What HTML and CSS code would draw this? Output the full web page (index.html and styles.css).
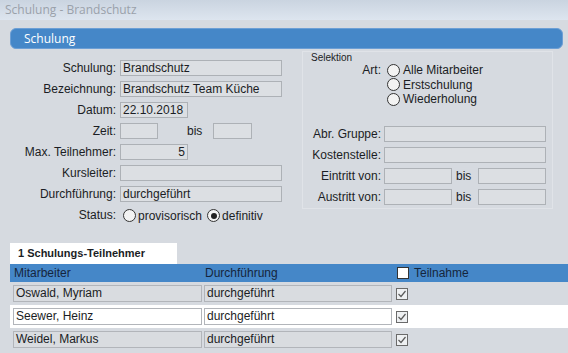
FILE: index.html
```html
<!DOCTYPE html>
<html lang="de">
<head>
    <meta charset="UTF-8">
    <title>Schulung - Brandschutz</title>
    <link rel="stylesheet" href="styles.css">
</head>
<body>
    <div class="titlebar">Schulung - Brandschutz</div>

    <div class="window">
        <div class="section-bar">Schulung</div>

        <div class="form">
            <div class="left">
                <label>Schulung:</label>
                <div class="field wide">Brandschutz</div>

                <label>Bezeichnung:</label>
                <div class="field wide">Brandschutz Team Küche</div>

                <label>Datum:</label>
                <div class="field short">22.10.2018</div>

                <label>Zeit:</label>
                <div class="zeit">
                    <div class="field tiny"></div>
                    <span class="bis">bis</span>
                    <div class="field tiny"></div>
                </div>

                <label>Max. Teilnehmer:</label>
                <div class="field short num">5</div>

                <label>Kursleiter:</label>
                <div class="field wide"></div>

                <label>Durchführung:</label>
                <div class="field wide">durchgeführt</div>

                <label>Status:</label>
                <div class="radios-inline">
                    <span class="radio"></span><span>provisorisch</span>
                    <span class="radio checked"></span><span>definitiv</span>
                </div>
            </div>

            <div class="selektion">
                <div class="legend">Selektion</div>
                <div class="sel-grid">
                    <label class="art-label">Art:</label>
                    <div class="radios">
                        <div class="radio-item"><span class="radio"></span>Alle Mitarbeiter</div>
                        <div class="radio-item"><span class="radio"></span>Erstschulung</div>
                        <div class="radio-item"><span class="radio"></span>Wiederholung</div>
                    </div>

                    <label class="first">Abr. Gruppe:</label>
                    <div class="field wide first"></div>

                    <label>Kostenstelle:</label>
                    <div class="field wide"></div>

                    <label>Eintritt von:</label>
                    <div class="range">
                        <div class="field short"></div>
                        <span class="bis">bis</span>
                        <div class="field short"></div>
                    </div>

                    <label>Austritt von:</label>
                    <div class="range">
                        <div class="field short"></div>
                        <span class="bis">bis</span>
                        <div class="field short"></div>
                    </div>
                </div>
            </div>
        </div>

        <div class="tab">1 Schulungs-Teilnehmer</div>

        <div class="table">
            <div class="row head">
                <span>Mitarbeiter</span>
                <span>Durchführung</span>
                <span class="teil"><span class="box"></span>Teilnahme</span>
            </div>
            <div class="row">
                <div class="cell">Oswald, Myriam</div>
                <div class="cell">durchgeführt</div>
                <span class="check"><svg width="12" height="12" viewBox="0 0 12 12"><polyline points="2.5,6 5,8.5 9.5,3" fill="none" stroke="#5a5a5a" stroke-width="1.2"/></svg></span>
            </div>
            <div class="row selected">
                <div class="cell">Seewer, Heinz</div>
                <div class="cell">durchgeführt</div>
                <span class="check"><svg width="12" height="12" viewBox="0 0 12 12"><polyline points="2.5,6 5,8.5 9.5,3" fill="none" stroke="#5a5a5a" stroke-width="1.2"/></svg></span>
            </div>
            <div class="row">
                <div class="cell">Weidel, Markus</div>
                <div class="cell">durchgeführt</div>
                <span class="check"><svg width="12" height="12" viewBox="0 0 12 12"><polyline points="2.5,6 5,8.5 9.5,3" fill="none" stroke="#5a5a5a" stroke-width="1.2"/></svg></span>
            </div>
        </div>
    </div>
</body>
</html>
```

FILE: styles.css
```css
body {
    margin: 0;
    font-family: "Liberation Sans", Arial, sans-serif;
    font-size: 12px;
    color: #1b1d24;
    background-color: #d6dae0;
    overflow: hidden;
}

.titlebar {
    height: 20px;
    line-height: 20px;
    padding-left: 5px;
    font-family: "Open Sans", "Noto Sans", sans-serif;
    font-size: 12px;
    color: #9aa1aa;
    background: linear-gradient(#cad4e0, #dde5ef);
}

.window {
    padding-left: 10px;
}

.section-bar {
    margin-top: 8px;
    width: 538px;
    height: 19px;
    line-height: 19px;
    padding-left: 13px;
    background-color: #4587c8;
    border: 1px solid #6d9fd5;
    border-radius: 6px;
    color: white;
    font-family: "Open Sans", "Noto Sans", sans-serif;
    font-size: 12px;
}

.form {
    display: flex;
    gap: 20px;
    height: 194px;
}

/* left side */
.left {
    display: grid;
    grid-template-columns: 106px 162px;
    grid-auto-rows: 16px;
    column-gap: 4px;
    row-gap: 5px;
    padding-top: 11px;
    align-content: start;
}

label {
    text-align: right;
    line-height: 16px;
    white-space: nowrap;
}

.field {
    box-sizing: border-box;
    height: 16px;
    line-height: 14px;
    padding: 0 2px;
    background-color: #dcdfe3;
    border: 1px solid #adb1b6;
    white-space: nowrap;
    overflow: hidden;
}

.wide {
    width: 162px;
}

.short {
    width: 68px;
}

.tiny {
    width: 38px;
}

.num {
    text-align: right;
}

.zeit,
.range {
    display: flex;
    align-items: center;
}

.zeit .bis {
    margin: 0 11px 0 29px;
}

.zeit .tiny:last-child {
    width: 39px;
}

.range .bis {
    width: 26px;
    padding-left: 4px;
    box-sizing: border-box;
}

.radios-inline {
    display: flex;
    align-items: center;
    gap: 2px;
    margin-left: 3px;
    margin-top: 1px;
}

.radios-inline .radio.checked {
    margin-left: 3px;
}

.radio {
    display: inline-block;
    box-sizing: border-box;
    width: 13px;
    height: 13px;
    border: 1px solid #333;
    border-radius: 50%;
    background-color: #f3f3f3;
    position: relative;
}

.radio.checked::after {
    content: "";
    position: absolute;
    left: 2.5px;
    top: 2.5px;
    width: 6px;
    height: 6px;
    border-radius: 50%;
    background-color: #222;
}

/* selektion box */
.selektion {
    box-sizing: border-box;
    width: 251px;
    height: 158px;
    margin-top: 2px;
    border: 1px solid #e0e3e8;
}

.legend {
    height: 11px;
    line-height: 11px;
    padding-left: 8px;
    font-size: 10px;
}

.sel-grid {
    display: grid;
    grid-template-columns: 78px 162px;
    column-gap: 3px;
    row-gap: 5px;
}

.art-label {
    line-height: 14.5px;
}

.radios {
    padding-left: 3px;
}

.radio-item {
    display: flex;
    align-items: center;
    gap: 3px;
    height: 14.5px;
}

.sel-grid .first {
    margin-top: 14px;
}

.range .field {
    width: 68px;
}

/* participants table */
.tab {
    width: 159px;
    height: 21px;
    line-height: 21px;
    padding-left: 8px;
    background-color: white;
    font-size: 11px;
    font-weight: bold;
}

.row {
    display: grid;
    grid-template-columns: 189px 188px auto;
    column-gap: 2px;
    align-items: center;
    height: 23px;
    padding-left: 3px;
}

.row.head {
    height: 18px;
    background-color: #4587c8;
    color: #15253c;
}

.row.head span:first-child {
    padding-left: 1px;
}

.row.head span:nth-child(2) {
    padding-left: 1px;
}

.row.selected {
    background-color: white;
}

.row.selected .cell {
    background-color: white;
}

.cell {
    box-sizing: border-box;
    height: 17px;
    line-height: 15px;
    padding-left: 2px;
    background-color: #d9dce0;
    border: 1px solid #b2b5ba;
}

.teil {
    display: flex;
    align-items: center;
    gap: 5px;
    margin-left: 3px;
}

.box {
    display: inline-block;
    box-sizing: border-box;
    width: 12px;
    height: 12px;
    background-color: white;
    border: 1px solid #333;
}

.check {
    display: inline-block;
    box-sizing: border-box;
    width: 12px;
    height: 12px;
    margin-left: 2px;
    background-color: #eef0f2;
    border: 1px solid #6a6a6a;
}

.check svg {
    display: block;
    margin: -1px;
}
```
